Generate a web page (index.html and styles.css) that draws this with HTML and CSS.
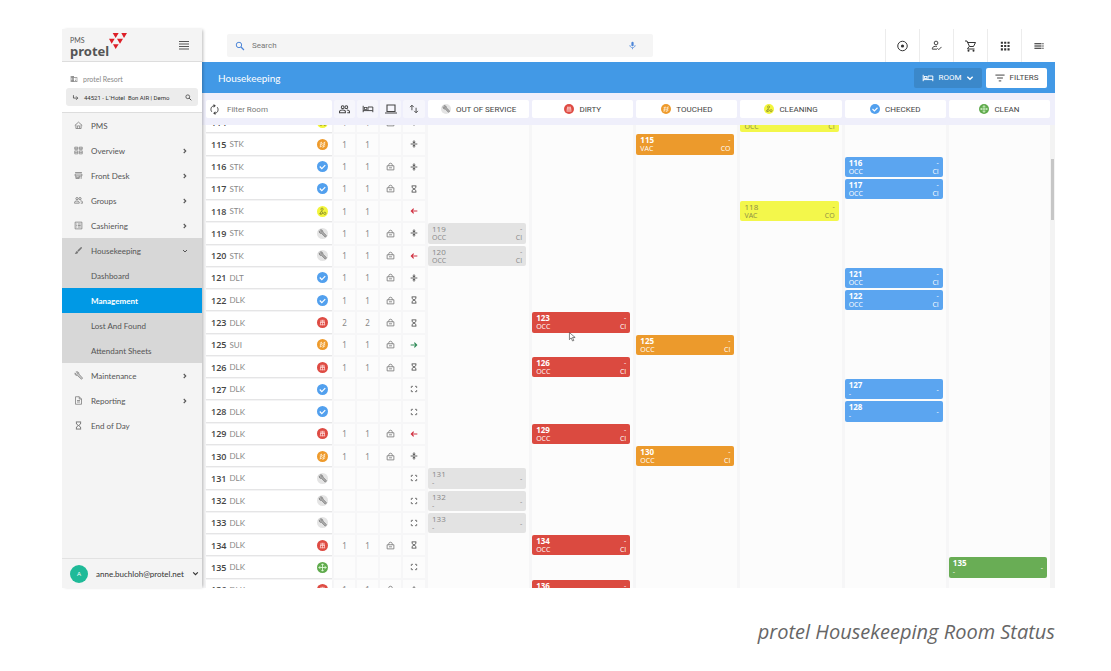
FILE: index.html
```html
<!DOCTYPE html>
<html lang="en">
<head>
<meta charset="utf-8">
<title>protel Housekeeping Room Status</title>
<link rel="stylesheet" href="styles.css">
</head>
<body>
<svg class="sprite" aria-hidden="true">
  <symbol id="i-menu" viewBox="0 0 12 10"><path d="M1 1.500h10M1 4h10M1 6.500h10M1 9h10" stroke="currentColor" stroke-width="1.200"/></symbol>
  <symbol id="i-building" viewBox="0 0 24 24"><path fill="currentColor" d="M12 7V3H2v18h20V7zM6 19H4v-2h2zm0-4H4v-2h2zm0-4H4V9h2zm0-4H4V5h2zm4 12H8v-2h2zm0-4H8v-2h2zm0-4H8V9h2zm0-4H8V5h2zm10 12h-8V9h8zM18 11h-3v2h3zm0 4h-3v2h3z"/></symbol>
  <symbol id="i-sub" viewBox="0 0 24 24"><path d="M5 4v10h14M14 8l6 6-6 6" fill="none" stroke="currentColor" stroke-width="2.400"/></symbol>
  <symbol id="i-search" viewBox="0 0 24 24"><circle cx="9.500" cy="9.500" r="6.500" fill="none" stroke="currentColor" stroke-width="2.400"/><path d="M14.500 14.500l7 7" stroke="currentColor" stroke-width="3"/></symbol>
  <symbol id="i-home" viewBox="0 0 24 24"><path d="M2 12L12 3l10 9M5 10v10h14V10M9 20v-7h6v7" fill="none" stroke="currentColor" stroke-width="2"/></symbol>
  <symbol id="i-overview" viewBox="0 0 24 24"><path d="M2 3h8v6H2zM14 3h8v6h-8zM2 13h8v8H2zM14 13h8v8h-8zM2 6h8M14 6h8M14 17h8M2 17h8" fill="none" stroke="currentColor" stroke-width="1.800"/></symbol>
  <symbol id="i-desk" viewBox="0 0 24 24"><path d="M3 4h18M3 8h18v5H3zM5 13v7h9v-7M19 13v8M6 17h8" fill="none" stroke="currentColor" stroke-width="2"/></symbol>
  <symbol id="i-people" viewBox="0 0 24 24"><g fill="none" stroke="currentColor" stroke-width="2.200"><circle cx="8" cy="7" r="3"/><circle cx="16" cy="7" r="3"/><path d="M1 19v-2c0-5 13-5 13 0v2zM17 13c4 0 6 1.500 6 4v2h-5"/></g></symbol>
  <symbol id="i-list" viewBox="0 0 24 24"><path d="M3 3h18v18H3zM6 8h2M10 8h8M6 12h2M10 12h8M6 16h2M10 16h8" fill="none" stroke="currentColor" stroke-width="2"/></symbol>
  <symbol id="i-brush" viewBox="0 0 24 24"><path d="M9 12l9-9c2-1 4 1 3 3l-9 9zM8 13l3 3c0 4-4 6-9 5 3-2 2-7 6-8z" fill="currentColor"/></symbol>
  <symbol id="i-wrench" viewBox="0 0 24 24"><path d="M3 5l4 4 3-3-4-4c3-1 8 1 7 6l10 11-3 3L9 12C5 13 1 9 3 5z" fill="currentColor" fill-opacity=".35" stroke="currentColor" stroke-width="1.800"/></symbol>
  <symbol id="i-doc" viewBox="0 0 24 24"><path d="M4 2h10l6 6v14H4zM14 2v6h6M8 12h8M8 16h8" fill="none" stroke="currentColor" stroke-width="2"/></symbol>
  <symbol id="i-glass" viewBox="0 0 24 24"><path d="M5 2.500h14M5 21.500h14M6.500 3v5l5.500 4 5.500-4V3M6.500 21v-5l5.500-4 5.500 4v5" fill="none" stroke="currentColor" stroke-width="2.600"/></symbol>
  <symbol id="i-right" viewBox="0 0 24 24"><path d="M7 4l8 8-8 8" fill="none" stroke="currentColor" stroke-width="4.500"/></symbol>
  <symbol id="i-down" viewBox="0 0 24 24"><path d="M4 8l8 8 8-8" fill="none" stroke="currentColor" stroke-width="4"/></symbol>
  <symbol id="i-mic" viewBox="0 0 24 24"><rect x="9" y="2" width="6" height="12" rx="3" fill="currentColor"/><path d="M5 11c0 9 14 9 14 0M12 18v4" fill="none" stroke="currentColor" stroke-width="2"/></symbol>
  <symbol id="i-target" viewBox="0 0 24 24"><circle cx="12" cy="12" r="9.500" fill="none" stroke="currentColor" stroke-width="2"/><circle cx="12" cy="12" r="3.200" fill="currentColor"/></symbol>
  <symbol id="i-userok" viewBox="0 0 24 24"><g fill="none" stroke="currentColor" stroke-width="2"><circle cx="11" cy="6.500" r="4"/><path d="M13 20H3v-2c0-3 5-5 10-4M14 18l3 3 6-6"/></g></symbol>
  <symbol id="i-cart" viewBox="0 0 24 24"><path d="M1 2h4l5 11h8l4-8M6 5h16M9 13l-3 5h14" fill="none" stroke="currentColor" stroke-width="2"/><circle cx="8" cy="21.500" r="2" fill="currentColor"/><circle cx="18" cy="21.500" r="2" fill="currentColor"/></symbol>
  <symbol id="i-apps" viewBox="0 0 24 24"><path d="M2 4h5M10 4h5M18 4h5M2 12h5M10 12h5M18 12h5M2 20h5M10 20h5M18 20h5" stroke="currentColor" stroke-width="5"/></symbol>
  <symbol id="i-toc" viewBox="0 0 24 24"><path d="M1 6h17M1 10h17M1 14h17M1 18h17M20 6h3M20 10h3M20 14h3M20 18h3" stroke="currentColor" stroke-width="2"/></symbol>
  <symbol id="i-bed" viewBox="0 0 28 20"><path d="M2 2v16M2 14h24M26 18V5H14v9" fill="none" stroke="currentColor" stroke-width="2.400"/><rect x="5" y="6" width="6" height="5" fill="none" stroke="currentColor" stroke-width="2"/></symbol>
  <symbol id="i-filter" viewBox="0 0 24 24"><path d="M1 5h22M5 12h14M9 19h6" stroke="currentColor" stroke-width="2.400"/></symbol>
  <symbol id="i-sync" viewBox="0 0 24 24"><path d="M11 4C5 4 2 12 6 17M13 20c6 0 9-8 5-13" fill="none" stroke="currentColor" stroke-width="2"/><path d="M10 0l5 4-5 4zM14 16l-5 4 5 4z" fill="currentColor"/></symbol>
  <symbol id="i-laptop" viewBox="0 0 24 20"><path d="M4 2h16v13H4zM0 18h24" fill="none" stroke="currentColor" stroke-width="2.200"/></symbol>
  <symbol id="i-sort" viewBox="0 0 24 24"><path d="M7 15V3M2.500 7.500L7 3l4.500 4.500M17 9v12M12.500 16.500L17 21l4.500-4.500" fill="none" stroke="currentColor" stroke-width="2.200"/></symbol>
  <symbol id="i-lock" viewBox="0 0 24 24"><path d="M3 10h18v11H3zM7.500 10V7c0-5 9-5 9 0v3M8 15.500h8" fill="none" stroke="currentColor" stroke-width="2.200"/></symbol>
  <symbol id="i-split" viewBox="0 0 24 24"><path d="M2 12h20M12 1v7M12 16v7" stroke="currentColor" stroke-width="2.800"/><path d="M6.500 5h11L12 10.500zM6.500 19h11L12 13.500z" fill="currentColor"/></symbol>
  <symbol id="i-out" viewBox="0 0 24 24"><path d="M3 12h19M11 5l-7 7 7 7" fill="none" stroke="currentColor" stroke-width="3.500"/></symbol>
  <symbol id="i-in" viewBox="0 0 24 24"><path d="M2 12h19M13 5l7 7-7 7" fill="none" stroke="currentColor" stroke-width="3.500"/></symbol>
  <symbol id="i-free" viewBox="0 0 24 24"><path d="M4 9V4h5M15 4h5v5M20 15v5h-5M9 20H4v-5" fill="none" stroke="currentColor" stroke-width="3"/></symbol>
  <symbol id="s-oos" viewBox="0 0 24 24"><circle cx="12" cy="12" r="12" fill="#e4e4e4"/><path d="M5 6l3 3 2-2-3-3c3-1 6 1 6 5l8 8-3 3-8-8C7 13 4 10 5 6z" fill="#aaa" stroke="#777" stroke-width="1.500"/></symbol>
  <symbol id="s-dirty" viewBox="0 0 24 24"><circle cx="12" cy="12" r="12" fill="#de4b43"/><path d="M8 9h8M6.500 12h11M7 17h10M9 6l-2 12M15 6l2 12M12 6v12" stroke="#ffd9d6" stroke-width="1.600" fill="none"/></symbol>
  <symbol id="s-touched" viewBox="0 0 24 24"><circle cx="12" cy="12" r="12" fill="#ee9a2b"/><path d="M6 9l4-1 2 2 6-3M6 13l4-1 2 2 6-3M6 17l4-1 2 2 6-3M10 6l-3 12M17 6l-3 12" stroke="#fff0d8" stroke-width="1.600" fill="none"/></symbol>
  <symbol id="s-cleaning" viewBox="0 0 24 24"><circle cx="12" cy="12" r="12" fill="#f2f53c"/><g fill="none" stroke="#83852c" stroke-width="1.700"><circle cx="11" cy="7" r="2.500"/><path d="M6 17l4-6 3 5-4 2zM6 17h4"/><circle cx="17" cy="16" r="2.500"/></g></symbol>
  <symbol id="s-checked" viewBox="0 0 24 24"><circle cx="12" cy="12" r="12" fill="#52a0ee"/><path d="M6 12l4.500 4.500L18 9" fill="none" stroke="#fff" stroke-width="2.600"/></symbol>
  <symbol id="s-clean" viewBox="0 0 24 24"><circle cx="12" cy="12" r="12" fill="#5faa4c"/><path d="M12 4v16M4 12h16M9 7l3-3 3 3M9 17l3 3 3-3M7 9l-3 3 3 3M17 9l3 3-3 3" fill="none" stroke="#e8ffe2" stroke-width="1.800"/></symbol>
</svg>

<figure class="figure">
  <div class="app">
    <aside class="side">
      <div class="brand">
        <div class="brand-name"><span class="brand-sub">PMS</span><span class="brand-word">protel</span></div>
        <svg class="brand-mark" viewBox="0 0 54 48" aria-hidden="true"><path d="M11 0h18l-9 15zM37 0h17l-9 15zM0 17h17l-9 15zM24 17h18l-9 15zM12 34h17l-9 14z" fill="#dd1f27"/></svg>
        <button class="plain burger" type="button" aria-label="Menu"><svg class="ic12"><use href="#i-menu"/></svg></button>
      </div>
      <div class="property">
        <div class="resort"><svg class="ic8"><use href="#i-building"/></svg>protel Resort</div>
        <button class="hotel" type="button"><svg class="ic7"><use href="#i-sub"/></svg><span>44521 - L´Hotel&nbsp; Bon AIR | Demo</span><svg class="ic7"><use href="#i-search"/></svg></button>
      </div>
      <nav class="nav">
        <a href="#"><svg class="ic8"><use href="#i-home"/></svg><span>PMS</span></a>
        <a href="#"><svg class="ic8"><use href="#i-overview"/></svg><span>Overview</span><svg class="ic6"><use href="#i-right"/></svg></a>
        <a href="#"><svg class="ic8"><use href="#i-desk"/></svg><span>Front Desk</span><svg class="ic6"><use href="#i-right"/></svg></a>
        <a href="#"><svg class="ic8"><use href="#i-people"/></svg><span>Groups</span><svg class="ic6"><use href="#i-right"/></svg></a>
        <a href="#"><svg class="ic8"><use href="#i-list"/></svg><span>Cashiering</span><svg class="ic6"><use href="#i-right"/></svg></a>
        <div class="open">
          <a href="#"><svg class="ic8"><use href="#i-brush"/></svg><span>Housekeeping</span><svg class="ic6"><use href="#i-down"/></svg></a>
          <a class="child" href="#">Dashboard</a>
          <a class="child current" href="#">Management</a>
          <a class="child" href="#">Lost And Found</a>
          <a class="child" href="#">Attendant Sheets</a>
        </div>
        <a href="#"><svg class="ic8"><use href="#i-wrench"/></svg><span>Maintenance</span><svg class="ic6"><use href="#i-right"/></svg></a>
        <a href="#"><svg class="ic8"><use href="#i-doc"/></svg><span>Reporting</span><svg class="ic6"><use href="#i-right"/></svg></a>
        <a href="#"><svg class="ic8"><use href="#i-glass"/></svg><span>End of Day</span></a>
      </nav>
      <button class="user" type="button"><span class="avatar">A</span><span class="mail">anne.buchloh@protel.net</span><svg class="ic7"><use href="#i-down"/></svg></button>
    </aside>

    <main class="main">
      <header class="top">
        <label class="search"><svg class="ic10"><use href="#i-search"/></svg><input type="text" placeholder="Search" aria-label="Search"><svg class="ic9"><use href="#i-mic"/></svg></label>
        <div class="tools">
          <button class="plain" type="button" aria-label="Target"><svg class="ic13"><use href="#i-target"/></svg></button>
          <button class="plain" type="button" aria-label="Users"><svg class="ic11"><use href="#i-userok"/></svg></button>
          <button class="plain" type="button" aria-label="Cart"><svg class="ic13"><use href="#i-cart"/></svg></button>
          <button class="plain" type="button" aria-label="Apps"><svg class="ic10"><use href="#i-apps"/></svg></button>
          <button class="plain" type="button" aria-label="List"><svg class="ic10"><use href="#i-toc"/></svg></button>
        </div>
      </header>
      <div class="titlebar">
        <h1>Housekeeping</h1>
        <button class="btn room" type="button"><svg class="bed"><use href="#i-bed"/></svg>ROOM<svg class="ic8"><use href="#i-down"/></svg></button>
        <button class="btn filters" type="button"><svg class="ic10"><use href="#i-filter"/></svg>FILTERS</button>
      </div>
      <table class="board">
        <thead>
          <tr>
            <th><label class="find"><svg class="ic11"><use href="#i-sync"/></svg><input type="text" placeholder="Filter Room" aria-label="Filter Room"></label></th>
            <th class="tool"><svg class="ic11"><use href="#i-people"/></svg></th>
            <th class="tool"><svg class="bed"><use href="#i-bed"/></svg></th>
            <th class="tool"><svg class="ic12"><use href="#i-laptop"/></svg></th>
            <th class="tool"><svg class="ic10"><use href="#i-sort"/></svg></th>
            <th class="lane"><svg class="ic10"><use href="#s-oos"/></svg>OUT OF SERVICE</th>
            <th class="lane"><svg class="ic10"><use href="#s-dirty"/></svg>DIRTY</th>
            <th class="lane"><svg class="ic10"><use href="#s-touched"/></svg>TOUCHED</th>
            <th class="lane"><svg class="ic10"><use href="#s-cleaning"/></svg>CLEANING</th>
            <th class="lane"><svg class="ic10"><use href="#s-checked"/></svg>CHECKED</th>
            <th class="lane"><svg class="ic10"><use href="#s-clean"/></svg>CLEAN</th>
          </tr>
        </thead>
        <tbody id="rooms"></tbody>
      </table>
      <div class="scrollbar"><div class="thumb"></div></div>
    </main>
    <svg class="pointer" viewBox="0 0 16 22" aria-hidden="true"><path d="M1 1v16l4-4 3 7 3-1-3-7h6z" fill="#fff" stroke="#444" stroke-width="1.500"/></svg>
  </div>
  <figcaption>protel Housekeeping Room Status</figcaption>
</figure>
<script src="board.js"></script>
</body>
</html>
```
FILE: styles.css
```css
* { box-sizing: border-box; }
body { margin: 0; background: #fff; color: #555; font-family: Lato, "Open Sans", sans-serif; font-size: 8px; }
svg { display: block; flex: none; overflow: visible; }
button, input { font: inherit; color: inherit; border: 0; margin: 0; padding: 0; background: none; }
a { color: inherit; text-decoration: none; }
.sprite { position: absolute; width: 0; height: 0; }
.ic6 { width: 6px; height: 6px; }
.ic7 { width: 7px; height: 7px; }
.ic8 { width: 8px; height: 8px; }
.ic9 { width: 9px; height: 9px; }
.ic10 { width: 10px; height: 10px; }
.ic11 { width: 11px; height: 11px; }
.ic12 { width: 12px; height: 10px; }
.ic13 { width: 13px; height: 12px; }
.bed { width: 12px; height: 8px; }

.figure { display: flex; flex-direction: column; height: 100vh; margin: 0; padding: 29px 56px 0 62px; }
.app { position: relative; display: flex; flex: 1; min-height: 0; }
figcaption { height: 83px; padding-top: 30px; text-align: right; font: italic 20px/28px "Open Sans", sans-serif; font-size: 20px; color: #666; }

.side { position: relative; z-index: 1; display: flex; flex-direction: column; width: 140px; background: #f4f4f4; box-shadow: 2px 0 3px -1px #0004; }
.brand { display: flex; height: 33px; padding: 0 12px 0 8px; border-bottom: 1px solid #ddd; }
.brand-name { display: flex; flex-direction: column; padding-top: 7px; }
.brand-sub { line-height: 8px; font-size: 7px; }
.brand-word { font: bold 13px/14px "Noto Sans", sans-serif; color: #555; }
.brand-mark { width: 18px; height: 16px; margin-top: 4px; }
.burger { margin-left: auto; }
.property { height: 51px; padding: 11px 4px 0; background: #fff; border-bottom: 1px solid #ddd; }
.resort { display: flex; align-items: center; gap: 5px; height: 11px; padding-left: 4px; font-size: 7px; color: #888; }
.hotel { display: flex; align-items: center; gap: 5px; width: 100%; height: 18px; margin-top: 4px; padding: 0 6px; border-radius: 3px; background: #ececec; font: 6px Roboto, sans-serif; color: #333; text-align: left; }
.hotel span { flex: 1; white-space: nowrap; }
.nav { display: flex; flex-direction: column; }
.nav a { display: flex; align-items: center; gap: 8px; height: 25px; padding: 0 14px 0 12px; }
.nav span { flex: 1; }
.nav .ic8 { width: 9px; height: 9px; color: #777; }
.open { background: #d7d7d7; }
.nav .child { padding-left: 29px; }
.nav .current { background: #0099e5; color: #fff; font-weight: bold; }
.user { display: flex; align-items: center; gap: 8px; height: 30px; margin-top: auto; padding: 0 5px 0 8px; border-top: 1px solid #e2e2e2; text-align: left; color: #333; }
.avatar { flex: none; width: 18px; height: 18px; border-radius: 50%; background: #1fba98; color: #fff; font-size: 6px; line-height: 18px; text-align: center; }
.mail { flex: 1; }

.main { position: relative; display: flex; flex: 1; flex-direction: column; min-width: 0; }
.top { display: flex; align-items: center; justify-content: space-between; height: 33px; padding-left: 25px; }
.search { display: flex; align-items: center; gap: 7px; width: calc(50% + 12px); height: 23px; padding: 0 16px 0 8px; border-radius: 2px; background: #f5f5f5; color: #4d86d8; }
.search input { flex: 1; font: 8px Roboto, sans-serif; }
input { min-width: 0; outline: 0; }
input::placeholder { color: #777; opacity: 1; }
.tools { display: flex; }
.plain { display: flex; align-items: center; justify-content: center; }
.tools .plain { width: 34px; height: 33px; border-left: 1px solid #ececec; color: #333; }
.titlebar { display: flex; align-items: center; gap: 4px; height: 31px; padding: 0 8px 0 16px; background: #4299e6; color: #fff; }
h1 { flex: 1; margin: 0; font-size: 10px; font-weight: normal; }
.btn { display: flex; align-items: center; justify-content: center; gap: 5px; height: 20px; border-radius: 2px; font-family: Roboto, sans-serif; }
.room { width: 68px; background: #3b88ca; }
.filters { width: 61px; background: #fff; color: #444; }

.board { display: flex; flex: 1; flex-direction: column; min-height: 0; background: #f6f6f7; }
thead, tbody { display: block; padding: 0 5px 0 4px; }
thead { background: #efeffb; }
tbody { flex: 1; min-height: 0; overflow: hidden; }
tr { display: grid; grid-template-columns: 126px 21px 21px 21px 22px repeat(6, minmax(0, 1fr)); column-gap: 2px; }
th, td { display: block; padding: 0; }
th { display: flex; align-items: center; justify-content: center; gap: 5px; height: 18px; margin: 7px 0; background: #fff; border-radius: 2px; font-family: Roboto, sans-serif; font-weight: normal; color: #444; }
th.tool { background: #f6f6fc; }
th.lane { margin-left: 1px; }
.find { display: flex; align-items: center; gap: 7px; width: 100%; padding: 0 3px; }
.find input { flex: 1; }

/* 21 rooms fill the viewport, whatever its height */
tbody tr { height: calc((100vh - 181px) / 22); }
td.name, td.cell { display: flex; align-items: center; margin-bottom: 2px; background: #fff; }
td.name { gap: 3px; padding: 0 4px 0 5px; box-shadow: 0 1px 1px #0001; color: #888; }
td.name b { font: 600 9px "Open Sans", sans-serif; color: #444; }
td.name svg { margin-left: auto; }
td.cell { justify-content: center; background: #fcfcfc; color: #888; font-family: "Noto Sans", sans-serif; }
.cell .ic9 { color: #777; }
td.move .ic8 { color: #555; }
td.free .ic8 { color: #777; }
td.out .ic8 { color: #d03040; }
td.in .ic8 { color: #2f8a57; }
td.lane { margin-left: 1px; padding: 0 3px 2px 0; background: #fcfcfc; }
.chip { display: flex; justify-content: space-between; height: 100%; padding: 1px 4px 0; border-radius: 2px; color: #fff; font: 7px/9px "Open Sans", sans-serif; }
.chip b { display: block; font-size: 8px; }
.chip span { display: block; }
.chip .stay { text-align: right; }
.chip .mid { line-height: 19px; }
.oos { background: #e3e3e3; color: #888; }
.oos b, .cleaning b { font-weight: normal; }
.dirty { background: #db4a40; }
.touched { background: #ec9a2c; }
.cleaning { background: #f3f74b; color: #8b8c45; }
.checked { background: #5ba5f0; }
.clean { background: #69ad55; }

.scrollbar { position: absolute; top: 96px; right: 0; bottom: 0; width: 5px; background: #f3f3f3; }
.thumb { width: 3px; height: 61px; margin: 34px 1px 0; background: #c6c6c6; }
.pointer { position: absolute; z-index: 2; left: 507px; top: 303px; width: 7px; height: 10px; }
```
FILE: board.js
```javascript
// room, type, status, guests, locked, movement, occupancy, stay
const rooms = [
  [114, 'STK', 'cleaning', 1, 1, 'split', 'OCC', 'CI'],
  [115, 'STK', 'touched', 1, 0, 'split', 'VAC', 'CO'],
  [116, 'STK', 'checked', 1, 1, 'split', 'OCC', 'CI'],
  [117, 'STK', 'checked', 1, 1, 'glass', 'OCC', 'CI'],
  [118, 'STK', 'cleaning', 1, 0, 'out', 'VAC', 'CO'],
  [119, 'STK', 'oos', 1, 1, 'split', 'OCC', 'CI'],
  [120, 'STK', 'oos', 1, 1, 'out', 'OCC', 'CI'],
  [121, 'DLT', 'checked', 1, 1, 'split', 'OCC', 'CI'],
  [122, 'DLK', 'checked', 1, 1, 'glass', 'OCC', 'CI'],
  [123, 'DLK', 'dirty', 2, 1, 'glass', 'OCC', 'CI'],
  [125, 'SUI', 'touched', 1, 1, 'in', 'OCC', 'CI'],
  [126, 'DLK', 'dirty', 1, 1, 'glass', 'OCC', 'CI'],
  [127, 'DLK', 'checked', '', 0, 'free', '-', ''],
  [128, 'DLK', 'checked', '', 0, 'free', '-', ''],
  [129, 'DLK', 'dirty', 1, 1, 'out', 'OCC', 'CI'],
  [130, 'DLK', 'touched', 1, 1, 'split', 'OCC', 'CI'],
  [131, 'DLK', 'oos', '', 0, 'free', '-', ''],
  [132, 'DLK', 'oos', '', 0, 'free', '-', ''],
  [133, 'DLK', 'oos', '', 0, 'free', '-', ''],
  [134, 'DLK', 'dirty', 1, 1, 'glass', 'OCC', 'CI'],
  [135, 'DLK', 'clean', '', 0, 'free', '-', ''],
  [136, 'DLK', 'dirty', 1, 1, 'split', 'OCC', 'CI']
];
const lanes = ['oos', 'dirty', 'touched', 'cleaning', 'checked', 'clean'];
const icon = (id, size) => `<svg class="${size}"><use href="#${id}"/></svg>`;

const body = document.getElementById('rooms');
body.innerHTML = rooms.map(([no, type, status, guests, locked, move, occ, stay]) => {
  const right = stay
    ? `<div class="stay"><span>-</span><span>${stay}</span></div>`
    : '<div class="stay mid">-</div>';
  const chip = `<div class="chip ${status}"><div><b>${no}</b><span>${occ}</span></div>${right}</div>`;
  return `<tr>
    <td class="name"><b>${no}</b>${type}${icon('s-' + status, 'ic11')}</td>
    <td class="cell">${guests}</td>
    <td class="cell">${guests}</td>
    <td class="cell">${locked ? icon('i-lock', 'ic9') : ''}</td>
    <td class="cell move ${move}">${icon('i-' + move, 'ic8')}</td>
    ${lanes.map(l => `<td class="lane">${l === status ? chip : ''}</td>`).join('')}
  </tr>`;
}).join('');
body.scrollTop = 13;
```
